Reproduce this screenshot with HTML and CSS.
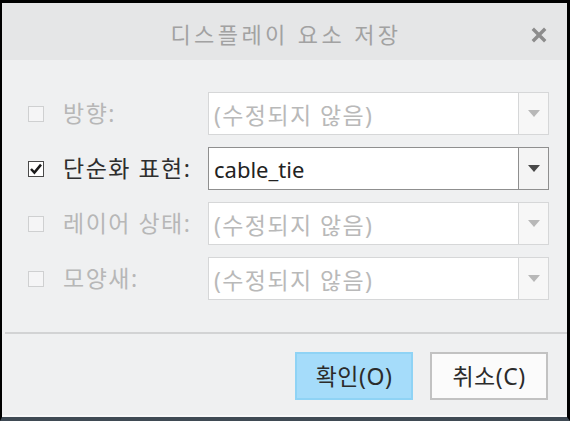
FILE: index.html
```html
<!DOCTYPE html>
<html lang="ko">
<head>
<meta charset="utf-8">
<title>디스플레이 요소 저장</title>
<link rel="stylesheet" href="styles.css">
</head>
<body>
<div class="frame">
  <div class="dialog">
    <header class="titlebar">
      <span class="title">디스플레이 요소 저장</span>
      <span class="close" aria-label="닫기">
        <svg width="16" height="16" viewBox="0 0 16 16"><path d="M3 3 L13 13 M13 3 L3 13" stroke="#8c8c8c" stroke-width="3.4" stroke-linecap="square"/></svg>
      </span>
    </header>
    <main class="body">
      <div class="rows">
        <div class="row disabled">
          <span class="check"></span>
          <span class="label">방향:</span>
          <div class="combo"><span class="value ko">(수정되지 않음)</span><span class="drop"><span class="arrow"></span></span></div>
        </div>
        <div class="row">
          <span class="check checked">
            <svg width="14" height="14" viewBox="0 0 14 14"><path d="M2 7 L5.4 10.6 L12 2.6" fill="none" stroke="#1a1a1a" stroke-width="2.5"/></svg>
          </span>
          <span class="label">단순화 표현:</span>
          <div class="combo"><span class="value">cable_tie</span><span class="drop"><span class="arrow"></span></span></div>
        </div>
        <div class="row disabled">
          <span class="check"></span>
          <span class="label">레이어 상태:</span>
          <div class="combo"><span class="value ko">(수정되지 않음)</span><span class="drop"><span class="arrow"></span></span></div>
        </div>
        <div class="row disabled">
          <span class="check"></span>
          <span class="label">모양새:</span>
          <div class="combo"><span class="value ko">(수정되지 않음)</span><span class="drop"><span class="arrow"></span></span></div>
        </div>
      </div>
      <div class="separator"></div>
      <div class="buttons">
        <button class="btn primary">확인(O)</button>
        <button class="btn">취소(C)</button>
      </div>
    </main>
  </div>
</div>
</body>
</html>
```

FILE: styles.css
```css
html, body {
  margin: 0;
  padding: 0;
  background: #ffffff;
}
body {
  font-family: "Noto Sans", "Noto Sans CJK KR", sans-serif;
  width: 572px;
  height: 423px;
  overflow: hidden;
}
.frame {
  width: 565px;
  height: 414px;
  border-top: 3px solid #000;
  border-left: 2px solid #000;
  border-right: 3px solid #000;
  border-bottom: 4px solid #3f4a54;
}
.dialog {
  height: 100%;
  display: flex;
  flex-direction: column;
  background: #eff0f1;
  border-bottom: 2px solid #f8f8f9;
  box-sizing: border-box;
}
.titlebar {
  height: 57px;
  background: #e5e6e7;
  display: flex;
  align-items: center;
  justify-content: center;
  position: relative;
  flex: none;
}
.title {
  font-size: 22px;
  letter-spacing: 3.4px;
  color: #a2a2a2;
  line-height: 1;
  margin-top: 4px;
  margin-left: 3px;
}
.close {
  position: absolute;
  right: 20px;
  top: 24px;
  width: 16px;
  height: 16px;
  display: flex;
}
.body {
  flex: 1;
  display: flex;
  flex-direction: column;
  padding-top: 32px;
}
.rows {
  display: flex;
  flex-direction: column;
  gap: 12px;
  padding-left: 26px;
  padding-right: 18px;
}
.row {
  display: flex;
  align-items: center;
  height: 43px;
}
.check {
  width: 14px;
  height: 14px;
  border: 1px solid #cfd0d1;
  background: #f5f5f6;
  flex: none;
  display: flex;
  align-items: center;
  justify-content: center;
}
.check.checked {
  border-color: #4a4a4a;
  background: #ffffff;
}
.label {
  margin-left: 19px;
  width: 145px;
  flex: none;
  font-size: 23px;
  letter-spacing: 1.5px;
  line-height: 1;
  color: #2e2e2e;
  white-space: nowrap;
}
.row.disabled .label {
  color: #b7b7b7;
}
.combo {
  flex: 1;
  height: 100%;
  box-sizing: border-box;
  border: 1px solid #8f8f8f;
  background: #ffffff;
  display: flex;
  align-items: stretch;
}
.row.disabled .combo {
  border-color: #d6d7d8;
}
.value {
  flex: 1;
  display: flex;
  align-items: center;
  padding-left: 5px;
  font-size: 22px;
  color: #222;
  white-space: nowrap;
}
.value.ko {
  font-size: 23px;
  letter-spacing: 1.4px;
}
.row.disabled .value {
  color: #b9b9b9;
}
.drop {
  width: 29px;
  flex: none;
  border-left: 1px solid #8f8f8f;
  background: #f4f4f4;
  display: flex;
  align-items: center;
  justify-content: center;
}
.row.disabled .drop {
  border-left-color: #d6d7d8;
  background: #f7f7f7;
}
.arrow {
  width: 0;
  height: 0;
  border-left: 6px solid transparent;
  border-right: 6px solid transparent;
  border-top: 7px solid #484848;
}
.row.disabled .arrow {
  border-top-color: #b8b8b8;
}
.separator {
  margin: 32px 0 0 3px;
  height: 2px;
  background: #d2d3d4;
}
.buttons {
  display: flex;
  justify-content: flex-end;
  gap: 17px;
  padding: 18px 19px 0 0;
}
.btn {
  width: 118px;
  height: 48px;
  box-sizing: border-box;
  border: 2px solid #c2c2c2;
  background: #fbfbfb;
  font-family: "Noto Sans", "Noto Sans CJK KR", sans-serif;
  font-size: 23px;
  letter-spacing: 0.5px;
  color: #2b2b2b;
  padding: 0;
  line-height: 1;
}
.btn.primary {
  background: #a5dcfa;
  border-color: #8fd3f5;
}
```
